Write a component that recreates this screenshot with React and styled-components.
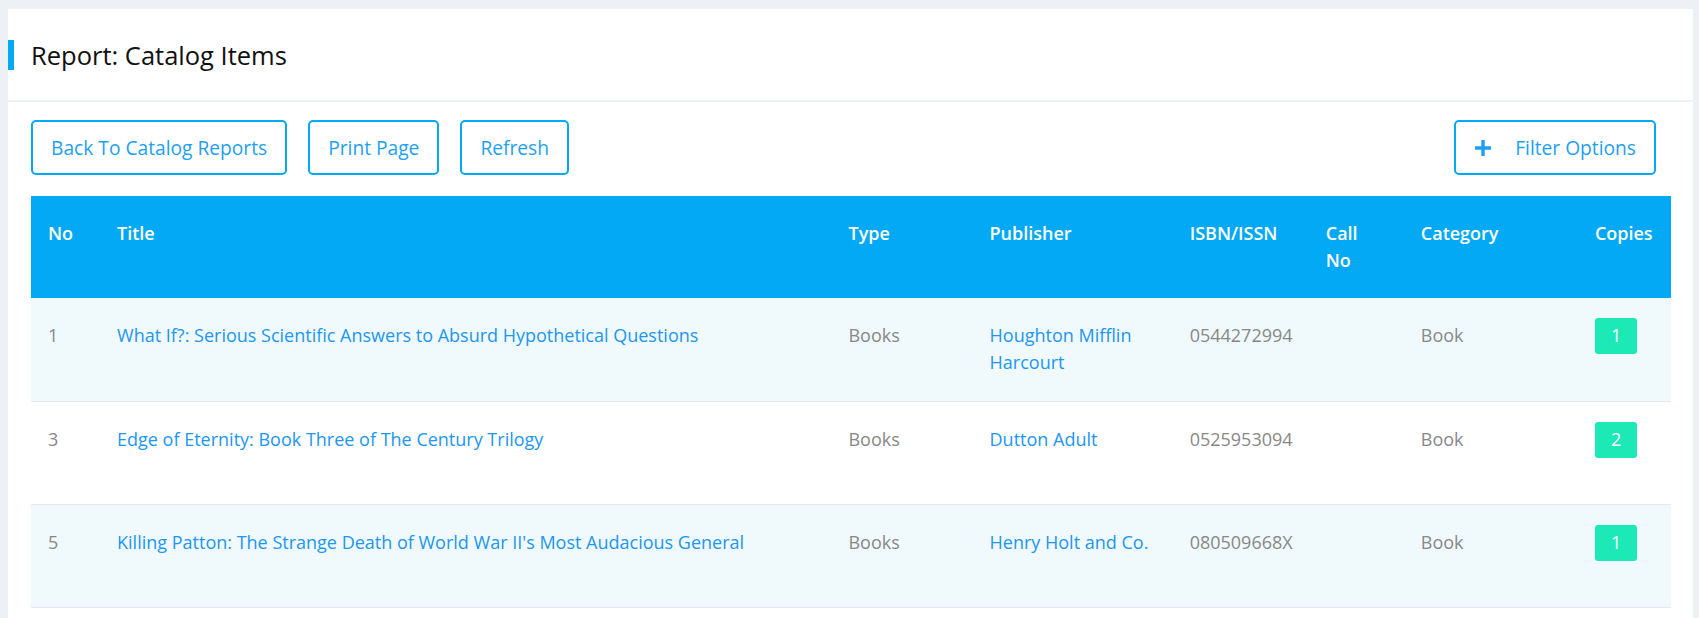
import React from 'react'
import styled, { createGlobalStyle } from 'styled-components'

const rows = [
  { no: 1, title: 'What If?: Serious Scientific Answers to Absurd Hypothetical Questions', type: 'Books', publisher: 'Houghton Mifflin Harcourt', isbn: '0544272994', callNo: '', category: 'Book', copies: 1 },
  { no: 3, title: 'Edge of Eternity: Book Three of The Century Trilogy', type: 'Books', publisher: 'Dutton Adult', isbn: '0525953094', callNo: '', category: 'Book', copies: 2 },
  { no: 5, title: "Killing Patton: The Strange Death of World War II's Most Audacious General", type: 'Books', publisher: 'Henry Holt and Co.', isbn: '080509668X', callNo: '', category: 'Book', copies: 1 },
]

const columns = [
  { label: 'No', width: 69 },
  { label: 'Title', width: 731 },
  { label: 'Type', width: 141 },
  { label: 'Publisher', width: 200 },
  { label: 'ISBN/ISSN', width: 136 },
  { label: 'Call No', width: 95 },
  { label: 'Category', width: 174 },
  { label: 'Copies', width: 93 },
]

export default function App() {
  return (
    <>
      <GlobalStyle />
      <Page>
        <Card>
          <CardHeader>
            <Heading>Report: Catalog Items</Heading>
          </CardHeader>
          <CardBody>
            <Toolbar>
              <Actions>
                <OutlineButton>Back To Catalog Reports</OutlineButton>
                <OutlineButton>Print Page</OutlineButton>
                <OutlineButton>Refresh</OutlineButton>
              </Actions>
              <OutlineButton>
                <PlusIcon viewBox="0 0 18 18">
                  <path d="M9 1v16M1 9h16" />
                </PlusIcon>
                Filter Options
              </OutlineButton>
            </Toolbar>
            <Table>
              <colgroup>
                {columns.map(c => <col key={c.label} style={{ width: c.width }} />)}
              </colgroup>
              <thead>
                <tr>
                  {columns.map(c => <Th key={c.label}>{c.label}</Th>)}
                </tr>
              </thead>
              <tbody>
                {rows.map((r, i) => (
                  <Row key={r.no} $striped={i % 2 === 0}>
                    <Td>{r.no}</Td>
                    <Td><Link href="#">{r.title}</Link></Td>
                    <Td>{r.type}</Td>
                    <Td><Link href="#">{r.publisher}</Link></Td>
                    <Td>{r.isbn}</Td>
                    <Td>{r.callNo}</Td>
                    <Td>{r.category}</Td>
                    <Td><Badge>{r.copies}</Badge></Td>
                  </Row>
                ))}
              </tbody>
            </Table>
          </CardBody>
        </Card>
      </Page>
    </>
  )
}

const GlobalStyle = createGlobalStyle`
body{
  margin: 0;
  background: #edf1f5;
  font-family: "Open Sans", "Noto Sans", sans-serif;
}
`;
const Page = styled.div`
padding: 9px 6px 0 8px;
`;
const Card = styled.div`
background: #fff;
`;
const CardHeader = styled.div`
height: 91px;
display: flex;
align-items: center;
border-bottom: 2px solid #edf1f5;
&::before{
  content: "";
  width: 6px;
  height: 30px;
  background: #03a9f4;
  margin-right: 17px;
}
`;
const Heading = styled.h1`
margin: 0;
font-size: 25.5px;
font-weight: 400;
color: #111;
`;
const CardBody = styled.div`
padding: 18px 22px 30px 23px;
`;
const Toolbar = styled.div`
display: flex;
justify-content: space-between;
align-items: center;
margin-right: 15px;
`;
const Actions = styled.div`
display: flex;
gap: 21px;
`;
const OutlineButton = styled.button`
height: 55px;
display: flex;
align-items: center;
padding: 0 18px;
border: 2px solid #03a9f4;
border-radius: 5px;
background: #fff;
color: #1e9ff2;
font-family: inherit;
font-size: 19.2px;
cursor: pointer;
`;
const PlusIcon = styled.svg`
width: 18px;
height: 18px;
margin-right: 23px;
stroke: #1e9ff2;
stroke-width: 3.4;
fill: none;
`;
const Table = styled.table`
width: 100%;
margin-top: 21px;
border-collapse: collapse;
table-layout: fixed;
font-size: 18px;
line-height: 27px;
`;
const Th = styled.th`
background: #03a9f4;
color: #fff;
font-weight: 600;
text-align: left;
vertical-align: top;
padding: 24px 17px;
`;
const Row = styled.tr`
background: ${p => (p.$striped ? '#f0fafd' : '#fff')};
border-bottom: 1px solid #e3e9ef;
`;
const Td = styled.td`
height: 103px;
box-sizing: border-box;
vertical-align: top;
padding: 24px 17px 0;
color: #888;
`;
const Link = styled.a`
color: #2196f3;
text-decoration: none;
`;
const Badge = styled.span`
display: inline-block;
margin-top: -4px;
padding: 4px 16px 5px;
border-radius: 3px;
background: #1de9b6;
color: #fff;
`;
